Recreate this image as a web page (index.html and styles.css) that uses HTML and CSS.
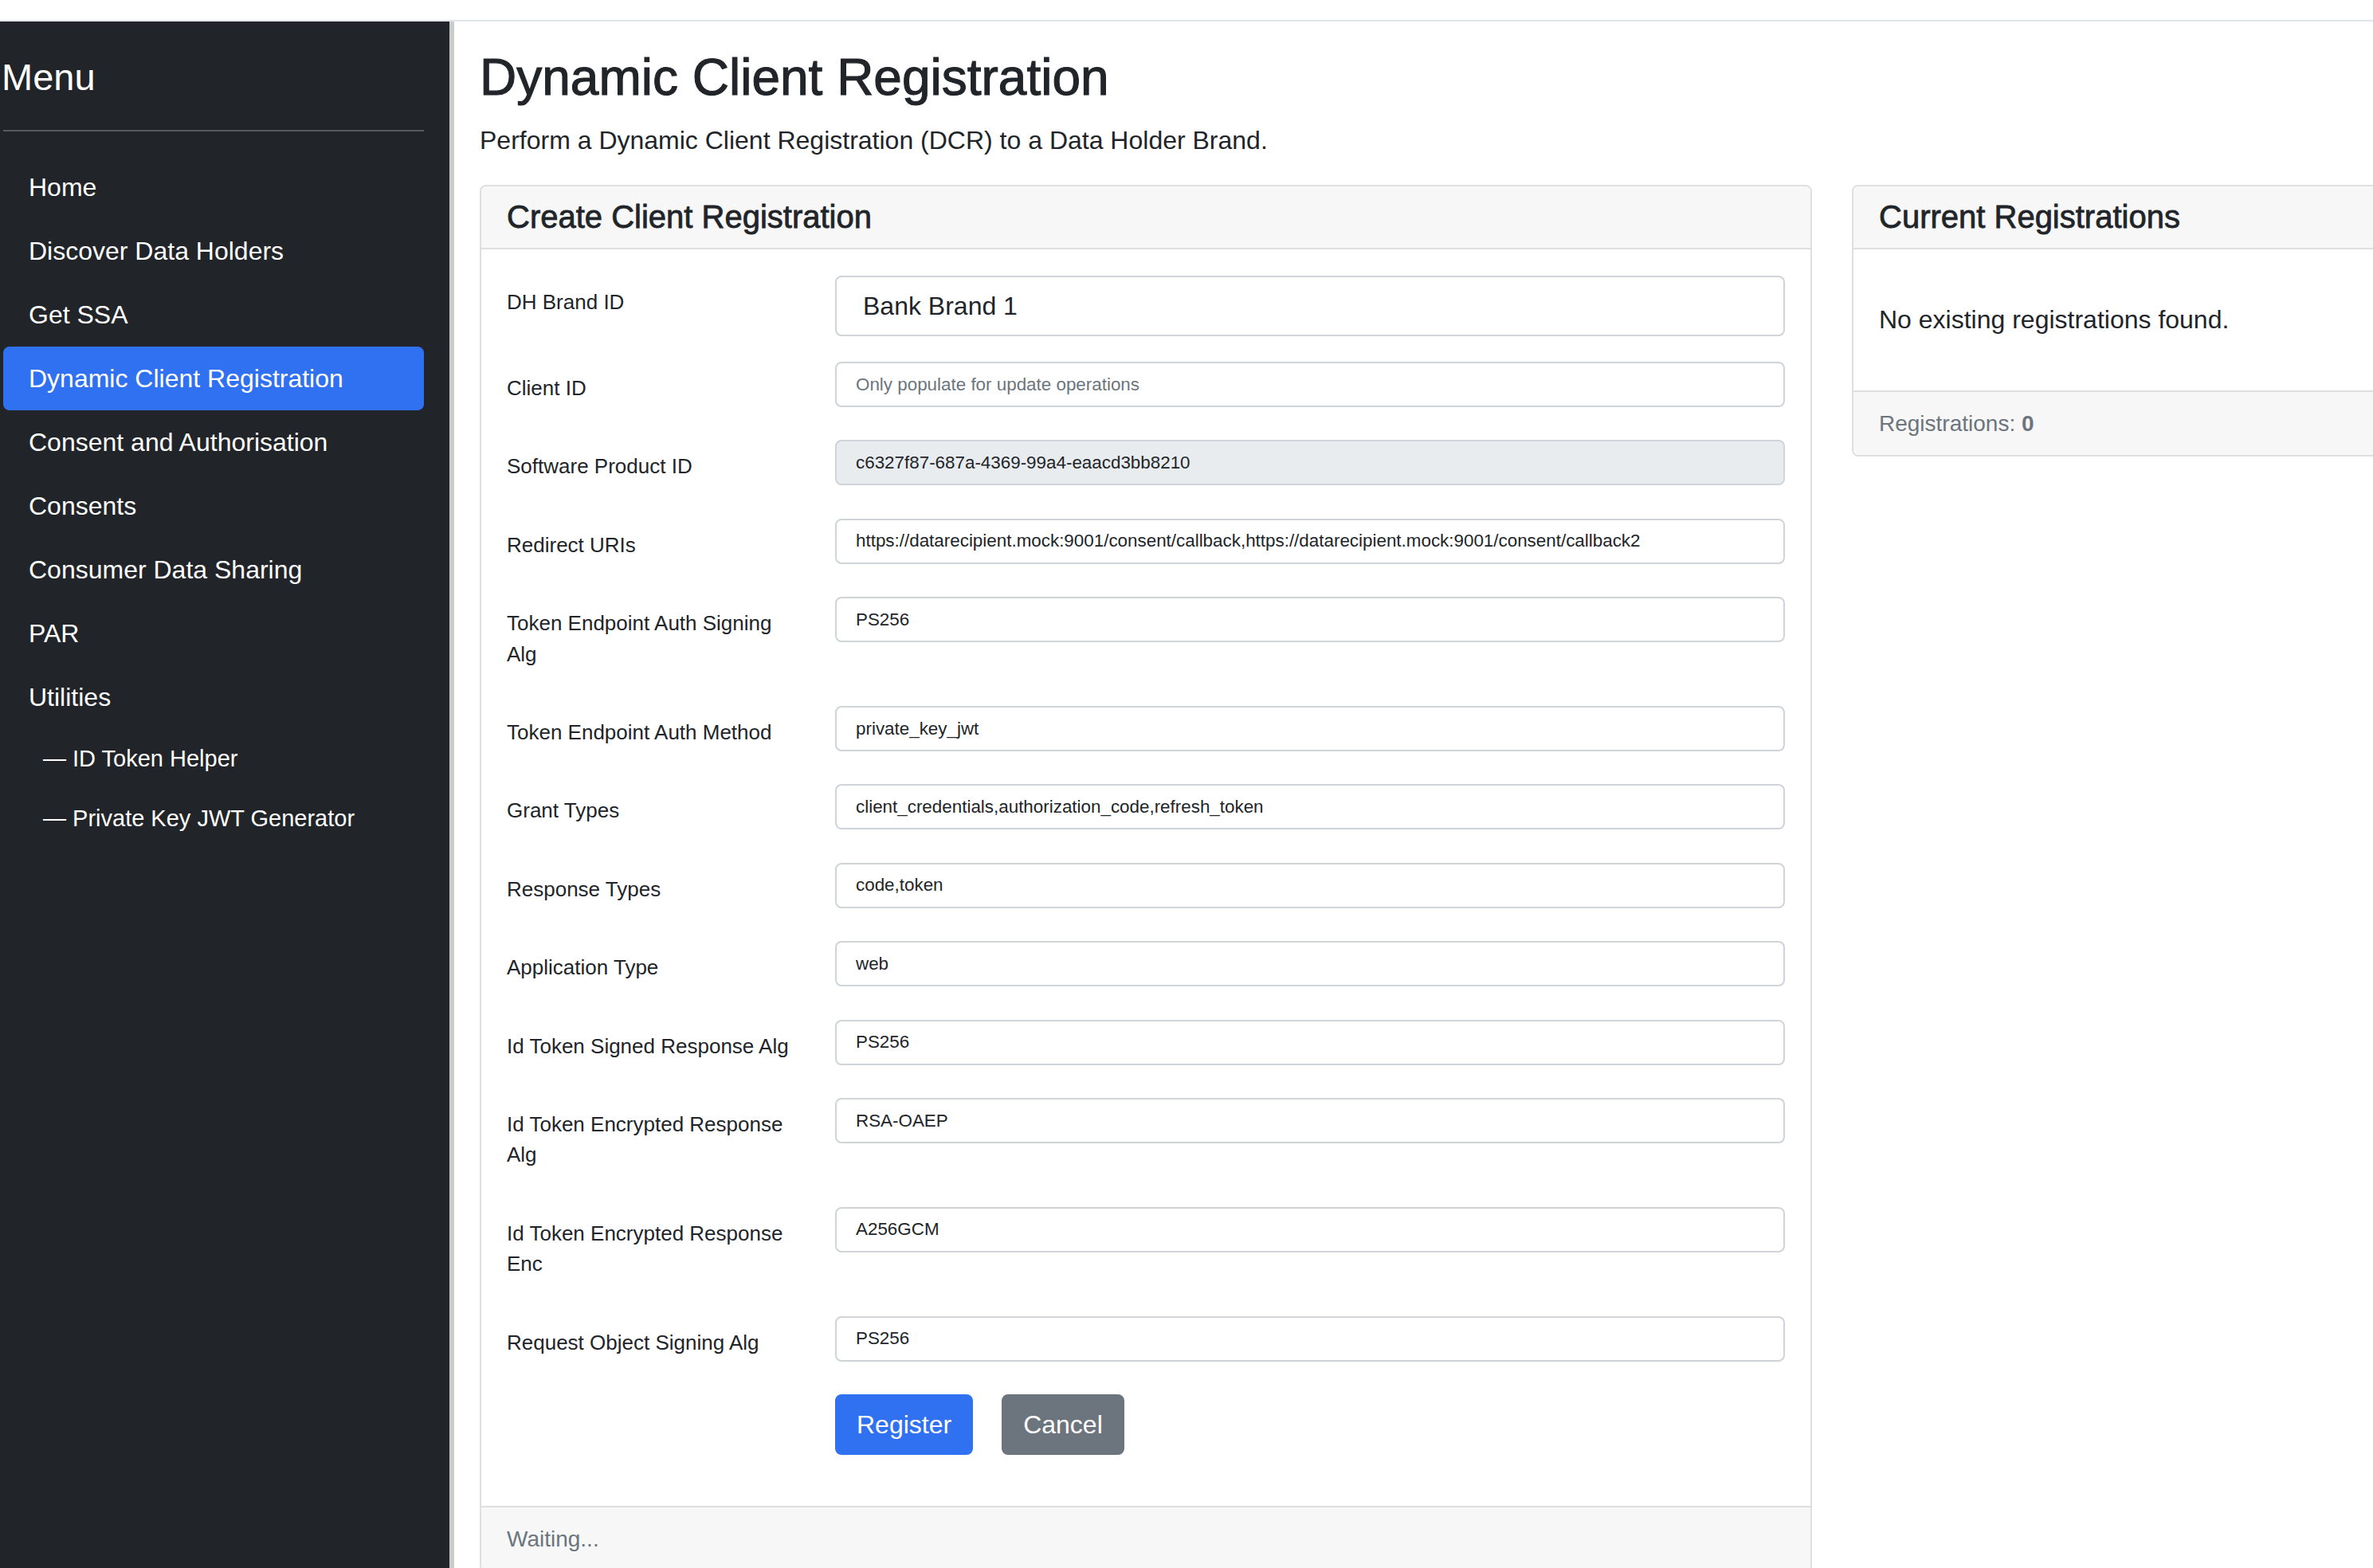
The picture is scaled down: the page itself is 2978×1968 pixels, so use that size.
FILE: index.html
```html
<!DOCTYPE html>
<html lang="en">
<head>
<meta charset="utf-8">
<title>Dynamic Client Registration</title>
<link rel="stylesheet" href="styles.css">
</head>
<body>
<div class="topbar"></div>
<div class="layout">
  <nav class="sidebar">
    <h4 class="menu-title">Menu</h4>
    <hr class="menu-rule">
    <ul class="nav">
      <li><a class="nav-link" href="#">Home</a></li>
      <li><a class="nav-link" href="#">Discover Data Holders</a></li>
      <li><a class="nav-link" href="#">Get SSA</a></li>
      <li><a class="nav-link active" href="#">Dynamic Client Registration</a></li>
      <li><a class="nav-link" href="#">Consent and Authorisation</a></li>
      <li><a class="nav-link" href="#">Consents</a></li>
      <li><a class="nav-link" href="#">Consumer Data Sharing</a></li>
      <li><a class="nav-link" href="#">PAR</a></li>
      <li><a class="nav-link" href="#">Utilities</a></li>
      <li><a class="nav-link sub" href="#">— ID Token Helper</a></li>
      <li><a class="nav-link sub" href="#">— Private Key JWT Generator</a></li>
    </ul>
  </nav>
  <main class="content">
    <h2 class="page-title">Dynamic Client Registration</h2>
    <p class="lead">Perform a Dynamic Client Registration (DCR) to a Data Holder Brand.</p>
    <div class="cards">
      <section class="card card-main">
        <div class="card-header"><h5 class="card-title">Create Client Registration</h5></div>
        <div class="card-body">
          <form class="form">
            <div class="form-row">
              <label class="form-label">DH Brand ID</label>
              <select class="form-control form-select"><option>Bank Brand 1</option></select>
            </div>
            <div class="form-row">
              <label class="form-label">Client ID</label>
              <input class="form-control" type="text" placeholder="Only populate for update operations">
            </div>
            <div class="form-row">
              <label class="form-label">Software Product ID</label>
              <input class="form-control" type="text" value="c6327f87-687a-4369-99a4-eaacd3bb8210" disabled>
            </div>
            <div class="form-row">
              <label class="form-label">Redirect URIs</label>
              <input class="form-control" type="text" value="https://datarecipient.mock:9001/consent/callback,https://datarecipient.mock:9001/consent/callback2">
            </div>
            <div class="form-row">
              <label class="form-label">Token Endpoint Auth Signing Alg</label>
              <input class="form-control" type="text" value="PS256">
            </div>
            <div class="form-row">
              <label class="form-label">Token Endpoint Auth Method</label>
              <input class="form-control" type="text" value="private_key_jwt">
            </div>
            <div class="form-row">
              <label class="form-label">Grant Types</label>
              <input class="form-control" type="text" value="client_credentials,authorization_code,refresh_token">
            </div>
            <div class="form-row">
              <label class="form-label">Response Types</label>
              <input class="form-control" type="text" value="code,token">
            </div>
            <div class="form-row">
              <label class="form-label">Application Type</label>
              <input class="form-control" type="text" value="web">
            </div>
            <div class="form-row">
              <label class="form-label">Id Token Signed Response Alg</label>
              <input class="form-control" type="text" value="PS256">
            </div>
            <div class="form-row">
              <label class="form-label">Id Token Encrypted Response Alg</label>
              <input class="form-control" type="text" value="RSA-OAEP">
            </div>
            <div class="form-row">
              <label class="form-label">Id Token Encrypted Response Enc</label>
              <input class="form-control" type="text" value="A256GCM">
            </div>
            <div class="form-row">
              <label class="form-label">Request Object Signing Alg</label>
              <input class="form-control" type="text" value="PS256">
            </div>
            <div class="actions">
              <button type="button" class="btn btn-primary">Register</button>
              <button type="button" class="btn btn-secondary">Cancel</button>
            </div>
          </form>
        </div>
        <div class="card-footer"><span class="muted">Waiting...</span></div>
      </section>
      <section class="card card-side">
        <div class="card-header"><h5 class="card-title">Current Registrations</h5></div>
        <div class="card-body side-body">
          <p class="empty">No existing registrations found.</p>
        </div>
        <div class="card-footer"><span class="muted">Registrations: <strong>0</strong></span></div>
      </section>
    </div>
  </main>
</div>
</body>
</html>
```

FILE: styles.css
```css
* { box-sizing: border-box; }
html, body { margin: 0; padding: 0; }
body {
  font-family: "Liberation Sans", Arial, sans-serif;
  color: #212529;
  background: #fff;
  width: 2978px;
  height: 1968px;
  overflow: hidden;
}
.topbar {
  height: 27px;
  border-bottom: 2px solid #e1e4e8;
}
.layout {
  display: flex;
  height: 1941px;
}
.sidebar {
  flex: 0 0 570px;
  background: #212529;
  border-right: 6px solid #cbcbcb;
  padding: 41px 32px 0 4px;
}
.menu-title {
  margin: 0 0 38px -2px;
  font-size: 47px;
  font-weight: 400;
  line-height: 57px;
  color: #fff;
}
.menu-rule {
  border: 0;
  border-top: 2px solid #56595d;
  margin: 0 0 30px;
}
.nav { list-style: none; margin: 0; padding: 0; }
.nav-link {
  display: block;
  padding: 16px 32px;
  font-size: 32px;
  line-height: 48px;
  color: #fff;
  text-decoration: none;
  border-radius: 8px;
}
.nav-link.active { background: #3071f2; }
.nav-link.sub {
  padding: 16px 32px 16px 50px;
  font-size: 29px;
  line-height: 43px;
}
.content {
  flex: 1;
  min-width: 0;
  padding: 32px;
  overflow: hidden;
}
.page-title {
  font-size: 64px;
  font-weight: 500;
  line-height: 77px;
  margin: 0 0 16px;
  -webkit-text-stroke: 1.1px #212529;
}
.lead {
  font-size: 32px;
  line-height: 48px;
  margin: 0 0 32px;
}
.cards {
  display: flex;
  gap: 50px;
  align-items: flex-start;
}
.card {
  border: 2px solid #dfdfdf;
  border-radius: 8px;
  background: #fff;
  flex-shrink: 0;
  overflow: hidden;
}
.card-main { width: 1672px; }
.card-side { width: 811px; }
.card-header {
  background: #f7f7f7;
  border-bottom: 2px solid #dfdfdf;
  padding: 14px 32px 15px;
}
.card-title {
  margin: 0;
  font-size: 40px;
  font-weight: 500;
  line-height: 48px;
  -webkit-text-stroke: 0.8px #212529;
}
.card-body { padding: 33px 32px 32px; }
.form-row {
  display: grid;
  grid-template-columns: 412px 1fr;
  align-items: start;
  margin-bottom: 32px;
}
.form-label {
  font-size: 26px;
  line-height: 38.4px;
  padding: 14px 40px 14px 0;
}
.form-control {
  display: block;
  width: 100%;
  height: 57px;
  border: 2px solid #ced4da;
  border-radius: 8px;
  padding: 0 24px;
  font-family: "Liberation Sans", Arial, sans-serif;
  font-size: 22.4px;
  color: #212529;
  background: #fff;
}
.form-control::placeholder { color: #6c757d; }
.form-control:disabled { background: #e9ecef; color: #212529; }
.form-select {
  height: 76px;
  font-size: 32px;
  padding: 0 33px;
  appearance: none;
  -webkit-appearance: none;
}
.actions {
  display: flex;
  gap: 36px;
  padding-left: 412px;
  margin-bottom: 32px;
}
.btn {
  font-family: "Liberation Sans", Arial, sans-serif;
  font-size: 32px;
  line-height: 48px;
  padding: 12px 25px;
  border: 2px solid transparent;
  border-radius: 8px;
  color: #fff;
}
.btn-primary { background: #3071f2; border-color: #3071f2; }
.btn-secondary { background: #6c757d; border-color: #6c757d; }
.card-footer {
  background: #f7f7f7;
  border-top: 2px solid #dfdfdf;
  padding: 19px 32px 18px;
}
.muted {
  color: #6c757d;
  font-size: 28px;
  line-height: 42px;
}
.side-body { padding: 64px 32px 65px; }
.empty {
  margin: 0;
  font-size: 32px;
  line-height: 48px;
}
```
